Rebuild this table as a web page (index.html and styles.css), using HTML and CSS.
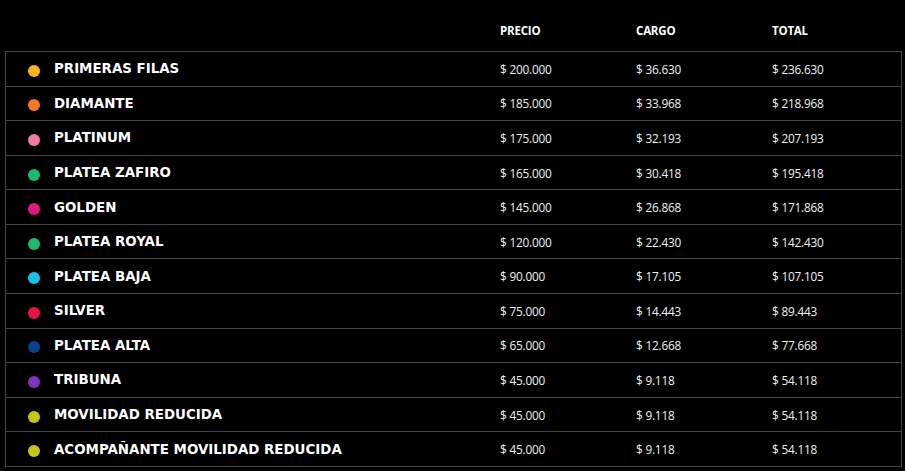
FILE: index.html
```html
<!DOCTYPE html>
<html lang="es">
<head>
<meta charset="utf-8">
<title>Precios</title>
<link rel="stylesheet" href="styles.css">
</head>
<body>
<div class="wrap">
  <div class="head">
    <div></div>
    <div class="hcell">PRECIO</div>
    <div class="hcell">CARGO</div>
    <div class="hcell">TOTAL</div>
  </div>
  <div class="table">
    <div class="row"><div class="name"><span class="dot c1"></span>PRIMERAS FILAS</div><div class="num">$ 200.000</div><div class="num">$ 36.630</div><div class="num">$ 236.630</div></div>
    <div class="row"><div class="name"><span class="dot c2"></span>DIAMANTE</div><div class="num">$ 185.000</div><div class="num">$ 33.968</div><div class="num">$ 218.968</div></div>
    <div class="row"><div class="name"><span class="dot c3"></span>PLATINUM</div><div class="num">$ 175.000</div><div class="num">$ 32.193</div><div class="num">$ 207.193</div></div>
    <div class="row"><div class="name"><span class="dot c4"></span>PLATEA ZAFIRO</div><div class="num">$ 165.000</div><div class="num">$ 30.418</div><div class="num">$ 195.418</div></div>
    <div class="row"><div class="name"><span class="dot c5"></span>GOLDEN</div><div class="num">$ 145.000</div><div class="num">$ 26.868</div><div class="num">$ 171.868</div></div>
    <div class="row"><div class="name"><span class="dot c4"></span>PLATEA ROYAL</div><div class="num">$ 120.000</div><div class="num">$ 22.430</div><div class="num">$ 142.430</div></div>
    <div class="row"><div class="name"><span class="dot c6"></span>PLATEA BAJA</div><div class="num">$ 90.000</div><div class="num">$ 17.105</div><div class="num">$ 107.105</div></div>
    <div class="row"><div class="name"><span class="dot c7"></span>SILVER</div><div class="num">$ 75.000</div><div class="num">$ 14.443</div><div class="num">$ 89.443</div></div>
    <div class="row"><div class="name"><span class="dot c8"></span>PLATEA ALTA</div><div class="num">$ 65.000</div><div class="num">$ 12.668</div><div class="num">$ 77.668</div></div>
    <div class="row"><div class="name"><span class="dot c9"></span>TRIBUNA</div><div class="num">$ 45.000</div><div class="num">$ 9.118</div><div class="num">$ 54.118</div></div>
    <div class="row"><div class="name"><span class="dot c10"></span>MOVILIDAD REDUCIDA</div><div class="num">$ 45.000</div><div class="num">$ 9.118</div><div class="num">$ 54.118</div></div>
    <div class="row"><div class="name"><span class="dot c10"></span>ACOMPAÑANTE MOVILIDAD REDUCIDA</div><div class="num">$ 45.000</div><div class="num">$ 9.118</div><div class="num">$ 54.118</div></div>
  </div>
</div>
</body>
</html>
```
FILE: styles.css
```css
html, body {
  margin: 0;
  background: #000;
  color: #fff;
}
.wrap {
  width: 897px;
  padding: 0 3px 5px 5px;
}
.head {
  display: grid;
  grid-template-columns: 487px 136px 136px 1fr;
  height: 51px;
  box-sizing: border-box;
  padding-top: 9px;
  align-items: center;
}
.hcell {
  padding-left: 8px;
  font-family: "Open Sans", sans-serif;
  font-weight: 700;
  font-size: 11.5px;
  letter-spacing: -0.2px;
}
.table {
  border: 1px solid #454545;
}
.row {
  display: grid;
  grid-template-columns: 486px 136px 136px 1fr;
  align-items: center;
  height: 34.58px;
  box-sizing: border-box;
  border-top: 1px solid #454545;
}
.row:first-child {
  border-top: none;
  height: 33.58px;
}
.name {
  display: flex;
  align-items: center;
  padding-left: 22px;
  font-family: "DejaVu Sans", sans-serif;
  font-weight: 700;
  font-size: 13.4px;
}
.dot {
  width: 12px;
  height: 12px;
  border-radius: 50%;
  margin-right: 14px;
  margin-top: 4px;
  flex: none;
}
.num {
  padding-left: 8px;
  font-family: "Open Sans", sans-serif;
  font-size: 11.8px;
  letter-spacing: -0.2px;
  color: #f2f2f2;
}
.c1 { background: #fbb21f; }
.c2 { background: #f47920; }
.c3 { background: #f47aa0; }
.c4 { background: #1cba6c; }
.c5 { background: #e0197d; }
.c6 { background: #17c2ea; }
.c7 { background: #e8124a; }
.c8 { background: #0d3f8c; }
.c9 { background: #7d35c0; }
.c10 { background: #c3c617; }
```
